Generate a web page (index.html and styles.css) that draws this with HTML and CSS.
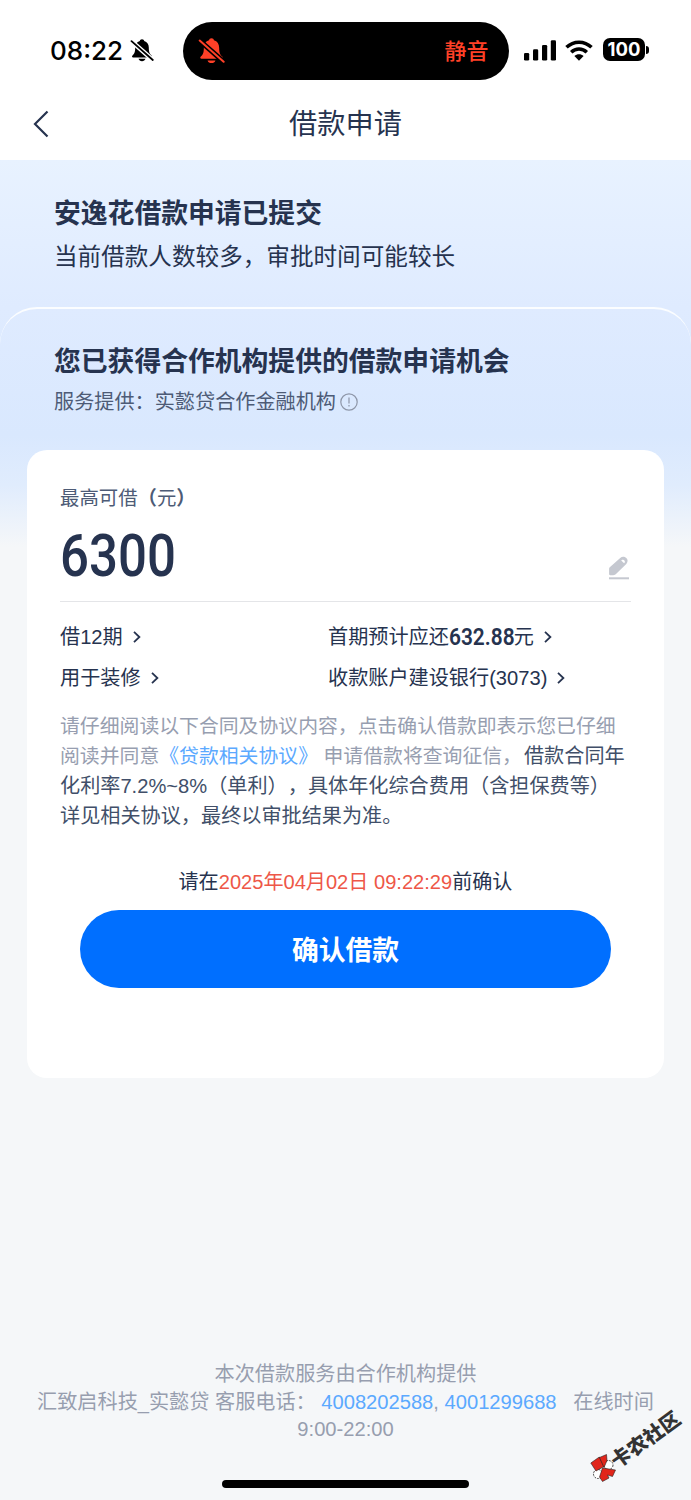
FILE: index.html
```html
<!DOCTYPE html>
<html lang="zh-CN">
<head>
<meta charset="utf-8">
<title>借款申请</title>
<link rel="stylesheet" href="styles.css">
</head>
<body>
<div class="screen">
  <header class="status">
    <div class="clock">08:22</div>
    <svg class="bell" viewBox="0 0 24 24"><path d="M12 1.200c-1.300 0-2 .8-2.200 1.700C6.700 3.800 5.200 6.300 5.200 9.500c0 4.800-1 6.300-2.700 7.900-.9.900-.5 2 .6 2h17.800c1.100 0 1.500-1.100.6-2-1.700-1.600-2.700-3.100-2.700-7.900 0-3.200-1.500-5.700-4.600-6.600C14 2 13.300 1.200 12 1.200zM8.500 20.800h7c-.5 1.600-1.800 2.400-3.500 2.400s-3-.8-3.500-2.400z"/><path class="cut" d="M1.500 3.200 22.800 22"/><path class="slash" d="M1.500 3.200 22.800 22"/></svg>
    <div class="island">
      <svg class="bell bell-red" viewBox="0 0 24 24"><path d="M12 1.200c-1.300 0-2 .8-2.200 1.700C6.700 3.800 5.200 6.300 5.200 9.500c0 4.800-1 6.300-2.700 7.900-.9.900-.5 2 .6 2h17.800c1.100 0 1.500-1.100.6-2-1.700-1.600-2.700-3.100-2.700-7.900 0-3.200-1.500-5.700-4.600-6.600C14 2 13.300 1.200 12 1.200zM8.500 20.800h7c-.5 1.600-1.800 2.400-3.500 2.400s-3-.8-3.500-2.400z"/><path class="cut" d="M1.500 3.200 22.800 22"/><path class="slash" d="M1.500 3.200 22.800 22"/></svg>
      <span class="mute">静音</span>
    </div>
    <svg class="signal" viewBox="0 0 32 21"><rect x="0" y="13" width="5.200" height="7.500" rx="1.300"/><rect x="9" y="9.200" width="5.200" height="11.300" rx="1.300"/><rect x="18" y="5" width="5.200" height="15.500" rx="1.300"/><rect x="26.800" y="0.300" width="5.200" height="20.200" rx="1.300"/></svg>
    <svg class="wifi" viewBox="0 0 28 21"><path class="arc" d="M1.500 7.300C8.500 .4 19.500 .4 26.500 7.300M6.200 12.200c4.500-4.300 11.100-4.300 15.600 0"/><path d="M14 20.800 9.400 16.100c2.600-2.400 6.600-2.400 9.200 0z"/></svg>
    <div class="battery"><span class="level">100</span></div>
    <div class="cap"></div>
  </header>
  <nav class="nav">
    <svg class="back" viewBox="0 0 16 28"><path d="M14.500 1.500 2 14l12.500 12.500"/></svg>
    <h1 class="title">借款申请</h1>
  </nav>
  <main class="main">
    <section class="submitted">
      <h2 class="heading">安逸花借款申请已提交</h2>
      <p class="sub">当前借款人数较多，审批时间可能较长</p>
    </section>
    <section class="offer">
      <h2 class="heading">您已获得合作机构提供的借款申请机会</h2>
      <p class="provider">服务提供：实懿贷合作金融机构<svg class="info" viewBox="0 0 18 18"><circle cx="9" cy="9" r="8.200"/><path d="M9 4.500v6M9 12v1.500"/></svg></p>
      <div class="card">
        <div class="label">最高可借<b>（</b>元<b>）</b></div>
        <div class="amount-row">
          <div class="amount"><span class="amount-num">6300</span></div>
          <svg class="edit" viewBox="0 0 22 24"><path d="M1.500 11.500 12.200 1.900c2-1.800 4.400-1.500 6.100.2s1.800 4 0 5.800L8.500 17.600c-1.100 1.100-1.900 1.600-3.300 1.600H2.300c-.8 0-1.200-.4-1.200-1.200v-4.500c0-.9 0-1.500.4-2z"/><path class="hole" d="m13.200 4.500.6-.6c2-.9 3.700.9 2.900 2.700l-.6.700z"/><path class="base" d="M1 22.300h20"/></svg>
        </div>
        <div class="details">
          <div class="cell">借12期<svg class="go" viewBox="0 0 8 12"><path d="m1 .8 5.400 5.200L1 11.200"/></svg></div>
          <div class="cell">首期预计应还<span class="due"><span class="due-num">632.88</span></span>元<svg class="go" viewBox="0 0 8 12"><path d="m1 .8 5.400 5.200L1 11.200"/></svg></div>
          <div class="cell">用于装修<svg class="go" viewBox="0 0 8 12"><path d="m1 .8 5.400 5.200L1 11.200"/></svg></div>
          <div class="cell">收款账户建设银行(3073)<svg class="go" viewBox="0 0 8 12"><path d="m1 .8 5.400 5.200L1 11.200"/></svg></div>
        </div>
        <p class="terms">请仔细阅读以下合同及协议内容，点击确认借款即表示您已仔细<br>阅读并同意<a class="link">《贷款相关协议》</a> 申请借款将查询征信，<span class="strong">借款合同年<br>化利率7.2%~8%（单利），具体年化综合费用（含担保费等）<br>详见相关协议，最终以审批结果为准。</span></p>
        <p class="deadline">请在<span class="time">2025年04月02日 09:22:29</span>前确认</p>
        <button class="confirm">确认借款</button>
      </div>
    </section>
  </main>
  <footer class="footer">
    <p>本次借款服务由合作机构提供</p>
    <p>汇致启科技_实懿贷 客服电话：&nbsp;<a class="link">4008202588</a>, <a class="link">4001299688</a>&nbsp;&nbsp; 在线时间</p>
    <p>9:00-22:00</p>
  </footer>
  <div class="home-bar"></div>
  <div class="watermark">
    <svg class="mark" viewBox="0 0 28 28"><g class="white"><circle cx="18.500" cy="11" r="4.500"/><circle cx="8" cy="20" r="4.500"/></g><g class="red"><path d="m.8 9 8.500-6 4.700 9.500L6 17z"/><path d="m9.500 3.500 7-3 .5 6-3 7z"/><path d="m12.500 14 13 2-3 6.500-5-1.500 1.500 3-6.500 3.500-3-4.500z"/></g></svg>
    <span class="mark-text">卡农社区</span>
  </div>
</div>
</body>
</html>
```
FILE: styles.css
```css
* { box-sizing: border-box; }
body {
  margin: 0;
  font-family: "Liberation Sans", "Noto Sans CJK SC", sans-serif;
  color: #26334f;
  text-spacing-trim: space-all;
}
h1, h2, p { margin: 0; }
.screen {
  position: relative;
  display: flex;
  flex-direction: column;
  width: 691px;
  height: 1500px;
  background: #f5f7f9;
  overflow: hidden;
}
.status {
  display: flex;
  align-items: center;
  height: 101px;
  padding-left: 50px;
  background: #fff;
  color: #000;
}
.clock {
  width: 80px;
  font: 500 26px/30px Inter, sans-serif;
}
.bell { width: 24px; height: 24px; margin-top: -2px; }
.bell .cut { stroke: #fff; stroke-width: 4.5; }
.bell .slash { stroke: #000; stroke-width: 1.8; stroke-linecap: round; }
.bell-red { width: 27px; height: 27px; margin-top: 0; fill: #ff4027; }
.bell-red .cut { stroke: #000; }
.bell-red .slash { stroke: #ff4027; }
.island {
  display: flex;
  align-items: center;
  justify-content: space-between;
  width: 326px;
  height: 58px;
  margin-left: 28.500px;
  padding: 0 20px 0 15px;
  border-radius: 29px;
  background: #000;
}
.mute {
  color: #ff4027;
  font: 500 22px/30px "Noto Sans CJK SC", sans-serif;
  transform: translateY(-2px);
}
.signal { width: 32px; height: 21px; margin: -1px 0 0 15.500px; }
.wifi { width: 28px; height: 21px; margin: -1px 0 0 9px; }
.arc { fill: none; stroke: #000; stroke-width: 3.5; }
.battery {
  width: 42px;
  height: 23px;
  margin: -2px 0 0 10px;
  border-radius: 7px;
  background: #000;
  color: #fff;
  text-align: center;
}
.level { display: block; font: 700 18.500px/23px Inter, sans-serif; }
.cap { width: 3px; height: 8px; margin: -2px 0 0 1px; border-radius: 0 4px 4px 0; background: #000; }
.status > * { flex-shrink: 0; }
.nav {
  display: grid;
  grid-template-columns: 60px 1fr 60px;
  height: 59px;
  background: #fff;
}
.back {
  width: 16px;
  height: 28px;
  margin: 9px 0 0 33px;
  fill: none;
  stroke: #26334f;
  stroke-width: 2.2;
}
.title {
  text-align: center;
  font-size: 28.200px;
  font-weight: 400;
  line-height: 47px;
}
.main {
  height: 1190px;
  background: linear-gradient(#e8f2ff 0, #dfebff 147px, #d9e8fe 275px, #e0ecfd 325px, #f5f7f9 387px);
}
.submitted { height: 147px; padding: 34px 54px 0; }
.heading { font-size: 26.800px; font-weight: 700; line-height: 40px; white-space: nowrap; }
.sub { margin-top: 5px; font-size: 23.600px; line-height: 36px; }
.offer {
  padding: 33px 27px 0;
  border-top: 2px solid #fbfdff;
  border-radius: 37px 37px 0 0;
}
.offer > .heading, .provider { padding-left: 27px; }
.provider {
  display: flex;
  align-items: center;
  height: 30px;
  margin-top: 5px;
  color: #4d5b76;
  font-size: 20.150px;
  line-height: 30px;
}
.info {
  width: 18px;
  height: 18px;
  margin: 0 0 0 4px;
  fill: none;
  stroke: #8e96a8;
  stroke-width: 1.2;
}
.card {
  height: 628px;
  margin-top: 33px;
  padding: 33px 33px 0;
  border-radius: 20px;
  background: #fff;
}
.label { color: #4d5b76; font-size: 19.400px; line-height: 30px; }
.amount-row {
  display: flex;
  justify-content: space-between;
  height: 89px;
  border-bottom: 1px solid #e4e5e8;
}
.amount { width: 118px; }
.amount-num {
  display: inline-block;
  font: 500 60px/85px Roboto, sans-serif;
  transform: scaleX(.85);
  transform-origin: left;
}
.edit { width: 22px; height: 24px; margin: 43px 1px 0 0; fill: #c5c8d0; }
.hole { fill: #fff; }
.base { stroke: #c5c8d0; stroke-width: 2; }
.details {
  display: grid;
  grid-template-columns: 268px 1fr;
  grid-auto-rows: 41px;
  padding-top: 15px;
  font-size: 20.150px;
  line-height: 41px;
}
.cell { display: flex; align-items: center; white-space: nowrap; }
.go { width: 8px; height: 12px; margin: -2px 0 0 10px; fill: none; stroke: #26334f; stroke-width: 1.8; }
.due { width: 65px; }
.due-num {
  display: inline-block;
  font: 600 24px/41px Roboto, sans-serif;
  transform: scaleX(.87);
  transform-origin: left;
}
.terms {
  margin-top: 12px;
  color: #979eb0;
  font-size: 19.850px;
  line-height: 30px;
  white-space: nowrap;
}
.strong { margin-left: 2px; color: #414f69; font-size: 20.150px; }
.link { color: #5ba9ff; }
.deadline {
  margin-top: 35px;
  text-align: center;
  font-size: 20.100px;
  line-height: 32px;
}
.time { color: #ee5748; }
.confirm {
  display: block;
  width: 531px;
  height: 78px;
  margin: 12px auto 0;
  padding: 0;
  border: 0;
  border-radius: 39px;
  background: #006fff;
  color: #fff;
  font: 700 26.800px/78px "Noto Sans CJK SC", sans-serif;
}
.footer {
  padding-top: 11px;
  color: #979eaf;
  text-align: center;
  font-size: 20.150px;
  line-height: 27.500px;
  white-space: nowrap;
}
.home-bar { width: 247px; height: 8px; margin: 36px auto 0; border-radius: 4px; background: #000; }
.watermark {
  position: absolute;
  left: 590px;
  top: 1454px;
  display: flex;
}
.mark { width: 28px; height: 28px; }
.red { fill: #e1251b; stroke: #222; stroke-width: .6; }
.white { fill: #fff; stroke: #222; stroke-width: .8; stroke-dasharray: 2 1; }
.mark-text {
  position: absolute;
  left: 15px;
  top: -30px;
  width: 80px;
  font: 900 20px/30px "Noto Sans CJK SC", sans-serif;
  color: #333;
  white-space: nowrap;
  transform: rotate(-36deg);
}
```
